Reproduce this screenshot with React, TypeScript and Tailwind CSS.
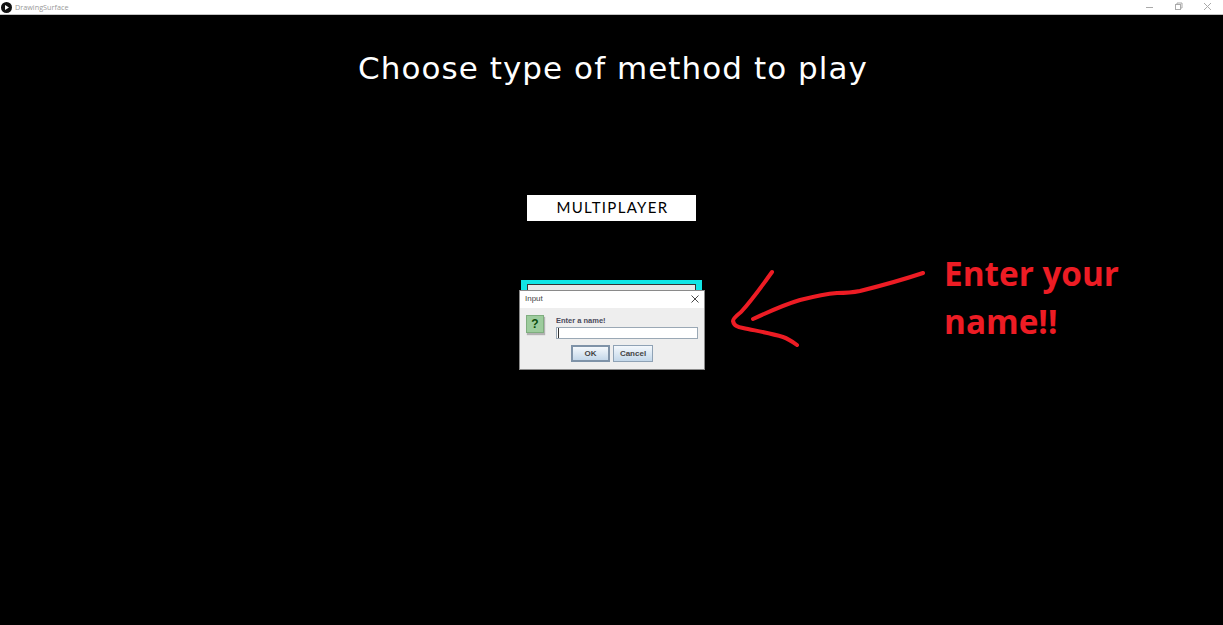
export default function App() {
  return (
    <div className="relative w-[1223px] h-[625px] overflow-hidden bg-black font-['Liberation_Sans',sans-serif]">
      {/* Window title bar */}
      <div className="flex h-[15px] items-center justify-between border-b border-[#c4c4c4] bg-white">
        <div className="flex items-center pl-[1px]">
          <svg width="11" height="11" viewBox="0 0 11 11">
            <circle cx="5.5" cy="5.5" r="5.5" fill="#111" />
            <path d="M4 3 L8 5.5 L4 8 Z" fill="#fff" />
          </svg>
          <span className="ml-[3px] text-[7.25px] leading-[11px] text-[#999] font-['Open_Sans',sans-serif]">DrawingSurface</span>
        </div>
        <div className="flex items-center gap-[19px] pr-[10px]">
          <svg width="10" height="10" viewBox="0 0 10 10"><path d="M1 5.5 H8" stroke="#aaa" strokeWidth="1" /></svg>
          <svg width="10" height="10" viewBox="0 0 10 10" fill="none" stroke="#aaa" strokeWidth="1"><rect x="1.5" y="2.5" width="5" height="5" /><path d="M3 2.5 V1 H8 V6 H6.5" /></svg>
          <svg width="10" height="10" viewBox="0 0 10 10" fill="none" stroke="#aaa" strokeWidth="1"><path d="M1 1 L8 8 M8 1 L1 8" /></svg>
        </div>
      </div>

      {/* Canvas */}
      <div className="flex flex-col items-center">
        <h1 className="mt-[34px] pl-[3px] text-[31px] leading-[38px] tracking-[1.05px] text-white font-['DejaVu_Sans',sans-serif] font-normal">
          Choose type of method to play
        </h1>
        <div className="mt-[108px] flex h-[26px] w-[169px] items-center justify-center bg-white pb-[1px] pl-[2px] text-[15px] tracking-[1.3px] text-black font-['Lato',sans-serif]">
          MULTIPLAYER
        </div>
        <div className="mt-[59px] h-[40px] w-[181px] border-x-[6px] border-t-[4px] border-[#11e5e5]">
          <div className="h-full border border-[#333] bg-[#e8e8e8]" />
        </div>
      </div>

      {/* Input dialog */}
      <div className="absolute left-[519px] top-[290px] flex h-[80px] w-[186px] flex-col border border-[#8a8a8a] bg-[#eeeeee] font-['Liberation_Sans',sans-serif]">
        <div className="flex h-[17px] items-center justify-between bg-white pb-[1px] pl-[5px] pr-[4px]">
          <span className="text-[8px] text-[#444]">Input</span>
          <svg width="10" height="10" viewBox="0 0 10 10" fill="none" stroke="#333" strokeWidth="0.9"><path d="M1.5 1.5 L8.5 8.5 M8.5 1.5 L1.5 8.5" /></svg>
        </div>
        <div className="flex pl-[6px] pr-[6px] pt-[6px]">
          <div className="mt-[1px] flex h-[18px] w-[18px] items-center justify-center border border-[#7fae7f] bg-[#9dcc9d] text-[12px] font-bold leading-none text-[#0b4d0b] shadow-[1px_2px_1px_rgba(0,0,0,0.25)]">
            ?
          </div>
          <div className="ml-[12px] flex flex-1 flex-col">
            <span className="text-[7.5px] font-bold leading-[13px] text-[#4a4a5a]">Enter a name!</span>
            <div className="h-[12px] w-[142px] border border-[#9aa8b5] bg-white pl-[1px]">
              <div className="h-full w-[1px] bg-[#333]" />
            </div>
          </div>
        </div>
        <div className="mt-[6px] flex justify-center gap-[3px]">
          <div className="flex h-[17px] w-[39px] items-center justify-center border-2 border-[#7f93a8] bg-gradient-to-b from-[#f4f8fc] to-[#c4d8ea] text-[8px] font-bold text-[#444]">OK</div>
          <div className="flex h-[17px] w-[40px] items-center justify-center border border-[#8fa2b5] bg-gradient-to-b from-[#f4f8fc] to-[#c4d8ea] text-[8px] font-bold text-[#444]">Cancel</div>
        </div>
      </div>

      {/* Hand-drawn arrow */}
      <svg className="absolute left-0 top-0" width="1223" height="625" fill="none" stroke="#ed1c24" strokeWidth="4" strokeLinecap="round" strokeLinejoin="round">
        <path d="M923 273 C905 279 880 286 860 291 C850 293 845 293 837 293 C825 294 812 297 800 300 C783 305 768 312 753 319" />
        <path d="M772 272 C762 286 752 300 741 312 C736 316 733 319 733 321 C734 326 738 327 743 328 C757 331 770 333 783 337 C789 339 793 342 797 345" />
      </svg>

      {/* Annotation */}
      <div className="absolute left-[944px] top-[249px] text-[33.3px] font-bold leading-[48px] text-[#ed1c24] font-['Open_Sans',sans-serif]">
        <div>Enter your</div>
        <div>name!!</div>
      </div>
    </div>
  );
}
